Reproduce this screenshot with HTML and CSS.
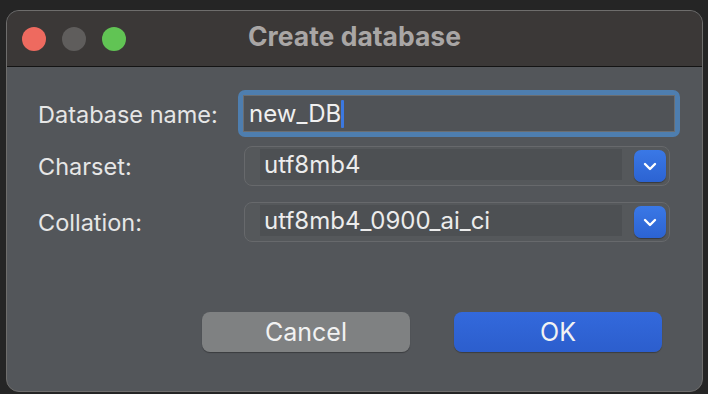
FILE: index.html
```html
<!DOCTYPE html>
<html>
<head>
<meta charset="utf-8">
<link rel="stylesheet" href="styles.css">
</head>
<body>
<div class="window">
  <div class="titlebar">
    <div class="lights">
      <span class="light red"></span>
      <span class="light gray"></span>
      <span class="light green"></span>
    </div>
    <div class="title">Create database</div>
  </div>
  <div class="content">
    <div class="row row-name">
      <div class="label">Database name:</div>
      <div class="name-ring">
        <div class="name-field"><span class="value">new_DB</span><span class="caret"></span></div>
      </div>
    </div>
    <div class="row row-charset">
      <div class="label">Charset:</div>
      <div class="combo">
        <div class="combo-text">utf8mb4</div>
        <div class="combo-btn"><svg width="14" height="9" viewBox="0 0 14 9"><path d="M2 2 L7 7 L12 2" fill="none" stroke="#fff" stroke-width="2.4" stroke-linecap="round" stroke-linejoin="round"/></svg></div>
      </div>
    </div>
    <div class="row row-collation">
      <div class="label">Collation:</div>
      <div class="combo">
        <div class="combo-text">utf8mb4_0900_ai_ci</div>
        <div class="combo-btn"><svg width="14" height="9" viewBox="0 0 14 9"><path d="M2 2 L7 7 L12 2" fill="none" stroke="#fff" stroke-width="2.4" stroke-linecap="round" stroke-linejoin="round"/></svg></div>
      </div>
    </div>
    <div class="actions">
      <button class="btn btn-cancel">Cancel</button>
      <button class="btn btn-ok">OK</button>
    </div>
  </div>
</div>
</body>
</html>
```
FILE: styles.css
```css
* { box-sizing: border-box; }
html, body { margin: 0; padding: 0; }
body {
  width: 708px;
  height: 394px;
  background: #252525;
  font-family: Inter, "Liberation Sans", sans-serif;
  overflow: hidden;
  padding: 10px 5px 2px 6px;
}
.window {
  width: 697px;
  height: 382px;
  border: 1px solid #6e6d6c;
  border-radius: 13px;
  overflow: hidden;
  background: #53565a;
  display: flex;
  flex-direction: column;
}
.titlebar {
  height: 56px;
  flex: none;
  background: #3b3837;
  border-bottom: 1px solid #141414;
  position: relative;
  display: flex;
  align-items: center;
}
.lights {
  display: flex;
  gap: 16px;
  padding-left: 15px;
}
.light {
  width: 24px;
  height: 24px;
  border-radius: 50%;
  display: block;
}
.red { background: #ee6a5f; }
.gray { background: #5f5d5c; }
.green { background: #61c454; }
.title {
  position: absolute;
  left: 0;
  right: 0;
  top: 9px;
  text-align: center;
  font-size: 26.5px;
  font-weight: 700;
  color: #a9a6a5;
  letter-spacing: 0;
}
.content {
  flex: 1;
  padding: 23px 0 0 31px;
  display: flex;
  flex-direction: column;
}
.row {
  display: flex;
  align-items: center;
}
.label {
  width: 200px;
  font-size: 23.5px;
  color: #e6e6e6;
  padding-top: 1px;
}
.row-charset { margin-top: 9px; }
.row-collation { margin-top: 16px; }
.row-charset .label, .row-collation .label { margin-right: 6px; }
.name-ring {
  width: 442px;
  height: 47px;
  border: 5px solid #4e7eaf;
  border-radius: 7px;
}
.name-field {
  height: 100%;
  border: 1px solid #6b6e71;
  background: #505357;
  display: flex;
  align-items: center;
  padding-left: 5px;
  font-size: 24px;
  color: #f0f0f0;
}
.caret {
  display: inline-block;
  width: 3px;
  height: 28px;
  background: #3b78e0;
  border-radius: 1px;
}
.combo {
  width: 426px;
  height: 40px;
  border: 1px solid #67696c;
  border-radius: 8px;
  display: flex;
  align-items: flex-start;
  padding: 2px 3px 0 15px;
  background: #55585b;
}
.combo-text {
  width: 362px;
  height: 31px;
  background: #4d5053;
  font-size: 24px;
  color: #ececec;
  padding-left: 4px;
  line-height: 31px;
}
.combo-btn {
  width: 32px;
  height: 32px;
  margin-left: 12px;
  margin-top: 1px;
  border-radius: 7px;
  background: linear-gradient(#3a78e6, #2c63d2);
  box-shadow: 0 1px 1px rgba(0,0,0,0.35);
  display: flex;
  align-items: center;
  justify-content: center;
}
.combo-btn svg { display: block; }
.actions {
  display: flex;
  justify-content: flex-end;
  gap: 44px;
  margin-top: 70px;
  padding-right: 40px;
}
.btn {
  width: 208px;
  height: 40px;
  border: none;
  border-radius: 8px;
  font-family: Inter, "Liberation Sans", sans-serif;
  font-size: 25px;
  color: #f2f2f2;
  padding: 0;
  box-shadow: 0 1px 1px rgba(0,0,0,0.3);
}
.btn-cancel { background: #7f8182; }
.btn-ok { background: linear-gradient(#3369dc, #2c5ecd); }
```
